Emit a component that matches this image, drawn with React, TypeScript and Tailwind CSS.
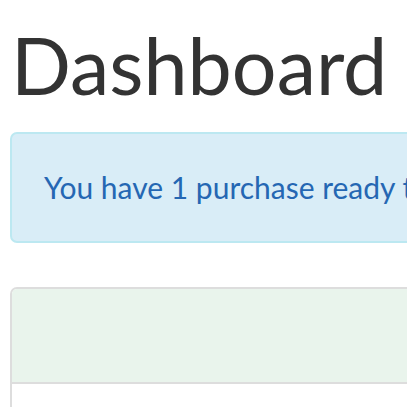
import React from 'react'

export default function App() {
  return (
    <div className="w-[407px] h-[407px] overflow-hidden bg-white font-['Lato','Liberation_Sans',sans-serif]">
      <div className="w-[700px] pl-[10px]">
        <h1 className="pl-[1px] pt-[17px] text-[79px] leading-[96px] text-[#333333] font-normal">Dashboard</h1>
        <div className="mt-[19px] h-[111px] flex items-center pl-[32px] rounded-[7px] border-2 border-[#bce8f1] bg-[#d9edf7]">
          <span className="text-[30px] text-[#2567b3] whitespace-nowrap">You have 1 purchase ready to pick up</span>
        </div>
        <div className="mt-[44px] rounded-t-[7px] border-2 border-[#dddddd]">
          <div className="h-[95px] bg-[#e9f4ec] border-b-2 border-[#dddddd] rounded-t-[5px]"></div>
          <div className="h-[60px] bg-white"></div>
        </div>
      </div>
    </div>
  )
}
